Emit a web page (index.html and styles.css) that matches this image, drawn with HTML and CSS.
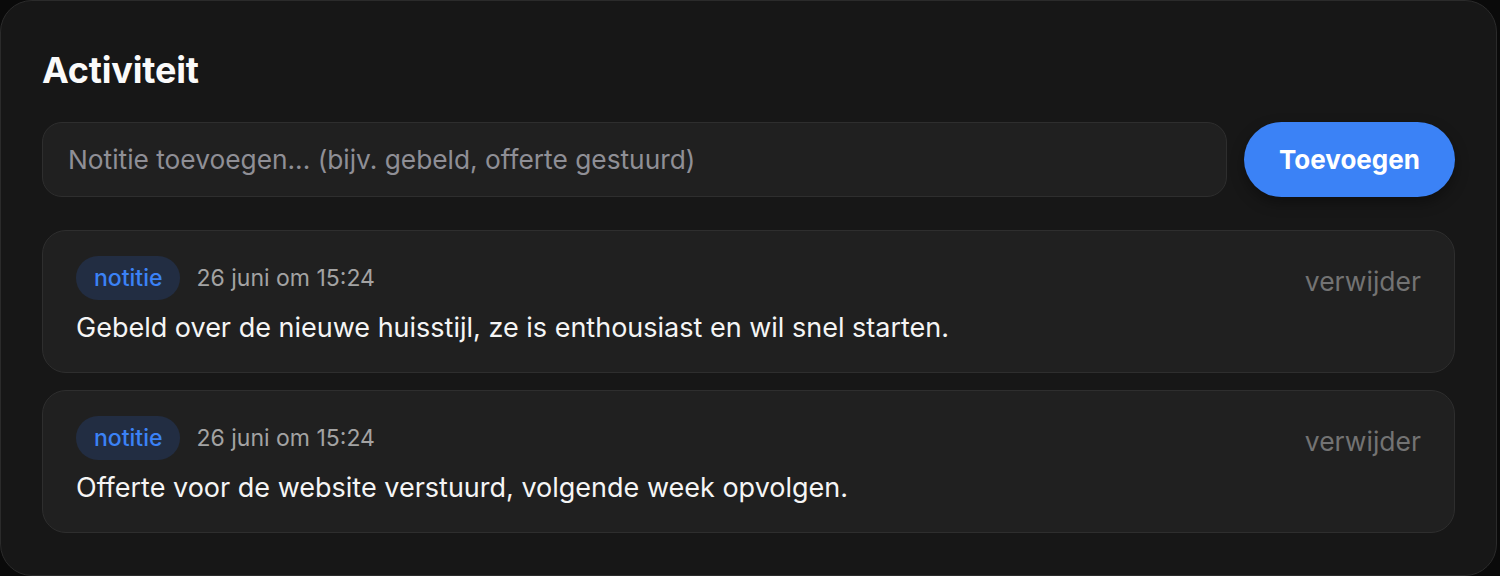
FILE: index.html
```html
<!DOCTYPE html>
<html lang="nl">
<head>
  <meta charset="UTF-8">
  <meta name="viewport" content="width=device-width, initial-scale=1.0">
  <title>Activiteit</title>
  <link rel="stylesheet" href="styles.css">
</head>
<body>
  <section class="panel">
    <h2 class="panel-title">Activiteit</h2>

    <form class="note-form">
      <input class="note-input" type="text" placeholder="Notitie toevoegen... (bijv. gebeld, offerte gestuurd)">
      <button class="note-add" type="button">Toevoegen</button>
    </form>

    <ul class="notes">
      <li class="note">
        <div class="note-body">
          <div class="note-meta">
            <span class="note-tag">notitie</span>
            <span class="note-date">26 juni om 15:24</span>
          </div>
          <p class="note-text">Gebeld over de nieuwe huisstijl, ze is enthousiast en wil snel starten.</p>
        </div>
        <button class="note-remove" type="button">verwijder</button>
      </li>
      <li class="note">
        <div class="note-body">
          <div class="note-meta">
            <span class="note-tag">notitie</span>
            <span class="note-date">26 juni om 15:24</span>
          </div>
          <p class="note-text">Offerte voor de website verstuurd, volgende week opvolgen.</p>
        </div>
        <button class="note-remove" type="button">verwijder</button>
      </li>
    </ul>
  </section>
</body>
</html>
```

FILE: styles.css
```css
*{
  box-sizing: border-box;
}
body{
  margin: 0;
  background: #0a0a0a;
  font-family: Inter, "Noto Sans", sans-serif;
  color: #f5f5f5;
}
.panel{
  width: 1497px;
  background: #171717;
  border: 1px solid #2b2b2b;
  border-radius: 32px;
  padding: 41px 41px 42px 41px;
}
.panel-title{
  margin: 8px 0 0;
  font-size: 36px;
  line-height: 40px;
  font-weight: 700;
  color: #fafafa;
  letter-spacing: -0.2px;
}
.note-form{
  display: flex;
  gap: 17px;
  margin-top: 32px;
}
.note-input{
  flex: 1;
  height: 75px;
  background: #202020;
  border: 1px solid #2e2e2e;
  border-radius: 20px;
  padding: 0 25px;
  font-family: inherit;
  font-size: 26.3px;
  color: #f5f5f5;
  outline: none;
}
.note-input::placeholder{
  color: #8f8f96;
}
.note-add{
  width: 211px;
  height: 75px;
  border: none;
  border-radius: 38px;
  background: #3b82f6;
  color: #fff;
  font-family: inherit;
  font-size: 26px;
  font-weight: 700;
  box-shadow: 0 6px 14px rgba(0, 0, 0, 0.35);
}
.notes{
  list-style: none;
  margin: 33px 0 0;
  padding: 0;
  display: flex;
  flex-direction: column;
  gap: 17px;
}
.note{
  display: flex;
  justify-content: space-between;
  align-items: flex-start;
  height: 143px;
  background: #202020;
  border: 1px solid #2e2e2e;
  border-radius: 24px;
  padding: 25px 33px 0 33px;
}
.note-meta{
  display: flex;
  align-items: center;
  gap: 16px;
}
.note-tag{
  display: inline-flex;
  align-items: center;
  height: 44px;
  padding: 0 18px;
  border-radius: 22px;
  background: #222d42;
  color: #3b82f6;
  font-size: 23px;
  font-weight: 500;
}
.note-date{
  font-size: 23px;
  color: #a3a3a3;
}
.note-text{
  margin: 10px 0 0;
  font-size: 27px;
  line-height: 36px;
  color: #f5f5f5;
}
.note-remove{
  margin-top: 9px;
  background: none;
  border: none;
  padding: 0;
  font-family: inherit;
  font-size: 26.5px;
  line-height: 32px;
  color: #737373;
}
```
